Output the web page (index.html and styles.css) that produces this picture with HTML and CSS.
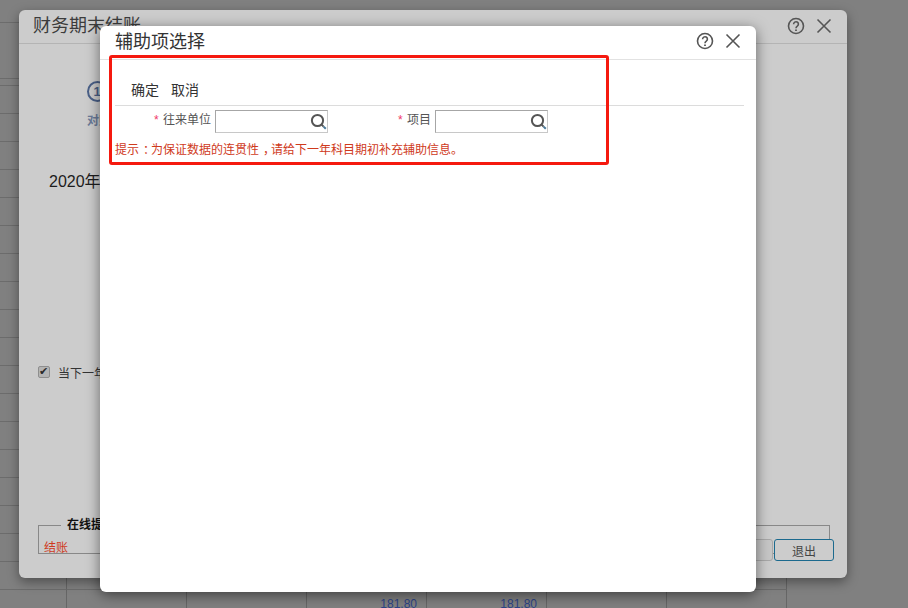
FILE: index.html
```html
<!DOCTYPE html>
<html lang="zh-CN">
<head>
<meta charset="utf-8">
<title>辅助项选择</title>
<link rel="stylesheet" href="styles.css">
</head>
<body>
<table class="sheet">
  <colgroup><col class="col-first"><col class="col"><col class="col"><col class="col"><col class="col"><col class="col"><col class="col"></colgroup>
  <tbody>
    <tr class="row-top"><td colspan="7"></td></tr>
    <tr class="row-head"><td colspan="7"></td></tr>
    <tr class="row-gap"><td colspan="7"></td></tr>
    <tr><td></td><td></td><td></td><td></td><td></td><td></td><td></td></tr>
    <tr><td></td><td></td><td></td><td></td><td></td><td></td><td></td></tr>
    <tr><td></td><td></td><td></td><td></td><td></td><td></td><td></td></tr>
    <tr><td></td><td></td><td></td><td></td><td></td><td></td><td></td></tr>
    <tr><td></td><td></td><td></td><td></td><td></td><td></td><td></td></tr>
    <tr><td></td><td></td><td></td><td></td><td></td><td></td><td></td></tr>
    <tr><td></td><td></td><td></td><td></td><td></td><td></td><td></td></tr>
    <tr><td></td><td></td><td></td><td></td><td></td><td></td><td></td></tr>
    <tr><td></td><td></td><td></td><td></td><td></td><td></td><td></td></tr>
    <tr><td></td><td></td><td></td><td></td><td></td><td></td><td></td></tr>
    <tr><td></td><td></td><td></td><td></td><td></td><td></td><td></td></tr>
    <tr><td></td><td></td><td></td><td></td><td></td><td></td><td></td></tr>
    <tr><td></td><td></td><td></td><td></td><td></td><td></td><td></td></tr>
    <tr><td></td><td></td><td></td><td></td><td></td><td></td><td></td></tr>
    <tr><td></td><td></td><td></td><td></td><td></td><td></td><td></td></tr>
    <tr><td></td><td></td><td></td><td></td><td></td><td></td><td></td></tr>
    <tr><td></td><td></td><td></td><td></td><td></td><td></td><td></td></tr>
    <tr><td></td><td></td><td></td><td></td><td></td><td></td><td></td></tr>
    <tr><td></td><td></td><td></td><td class="num">181.80</td><td class="num">181.80</td><td></td><td></td></tr>
  </tbody>
</table>

<section class="dialog outer">
  <header class="outer-head">
    <h2 class="dialog-title">财务期末结账</h2>
    <div class="head-icons">
      <svg class="icon" viewBox="0 0 18 18"><circle cx="9" cy="9" r="7.5"/><path d="M6.6 7.2a2.4 2.4 0 1 1 3.7 2c-.9.6-1.3 1-1.3 2"/><path class="dot" d="M9 12.6v1.3"/></svg>
      <svg class="icon" viewBox="0 0 18 18"><path d="M2.5 2.5l13 13M15.5 2.5l-13 13"/></svg>
    </div>
  </header>
  <div class="steps">
    <div class="step-mark">1</div>
    <div class="step-name">对账</div>
  </div>
  <p class="period">2020年</p>
  <label class="check"><input class="check-box" type="checkbox" checked><span>当下一年</span></label>
  <fieldset class="online">
    <legend class="online-legend">在线提示</legend>
    <span class="online-text">结账</span>
  </fieldset>
  <div class="actions">
    <button class="btn btn-off" type="button">结账</button>
    <button class="btn btn-exit" type="button">退出</button>
  </div>
</section>

<section class="dialog inner">
  <header class="inner-head">
    <h2 class="dialog-title">辅助项选择</h2>
    <div class="head-icons">
      <svg class="icon" viewBox="0 0 18 18"><circle cx="9" cy="9" r="7.5"/><path d="M6.6 7.2a2.4 2.4 0 1 1 3.7 2c-.9.6-1.3 1-1.3 2"/><path class="dot" d="M9 12.6v1.3"/></svg>
      <svg class="icon" viewBox="0 0 18 18"><path d="M2.5 2.5l13 13M15.5 2.5l-13 13"/></svg>
    </div>
  </header>
  <div class="inner-body">
    <div class="toolbar">
      <span class="tool">确定</span>
      <span class="tool">取消</span>
    </div>
    <div class="fields">
      <div class="field field-a">
        <span class="req">*</span><span class="field-label">往来单位</span>
        <div class="lookup"><svg class="lens" viewBox="0 0 18 18"><circle cx="7.5" cy="7.5" r="5.6"/><path class="lens-neck" d="M11.6 11.6l2 2"/><path class="lens-tail" d="M13.6 13.6l2.2 2.2"/></svg></div>
      </div>
      <div class="field field-b">
        <span class="req">*</span><span class="field-label">项目</span>
        <div class="lookup"><svg class="lens" viewBox="0 0 18 18"><circle cx="7.5" cy="7.5" r="5.6"/><path class="lens-neck" d="M11.6 11.6l2 2"/><path class="lens-tail" d="M13.6 13.6l2.2 2.2"/></svg></div>
      </div>
    </div>
    <p class="hint">提示<span class="punct">：</span>为保证数据的连贯性<span class="punct">，</span>请给下一年科目期初补充辅助信息。</p>
  </div>
  <div class="callout"></div>
</section>
</body>
</html>
```

FILE: styles.css
```css
* { box-sizing: border-box; }
html, body { margin: 0; height: 100%; }
body {
  position: relative;
  width: 908px;
  height: 608px;
  overflow: hidden;
  background: #808080;
  font-family: "Liberation Sans", "Noto Sans CJK SC", sans-serif;
  font-size: 12px;
  color: #333;
}

/* dimmed sheet behind the dialogs */
.sheet {
  width: 787px;
  table-layout: fixed;
  border-collapse: separate;
  border-spacing: 0;
}
.col-first { width: 67px; }
.col { width: 120px; }
.sheet td {
  height: 28px;
  padding: 0 9px 0 0;
  border-right: 1px solid #666;
  border-bottom: 1px solid #6c6c6c;
  text-align: right;
  color: #2c4387;
  font-size: 12px;
  line-height: 14px;
  vertical-align: middle;
}
.row-top td { height: 23px; border-right: 0; }
.row-head td { height: 56px; border-right: 0; }
.row-gap td { height: 7px; border-right: 0; }

/* windows */
.dialog { position: absolute; display: flex; flex-direction: column; }
.outer {
  left: 19px;
  top: 10px;
  width: 828px;
  height: 568px;
  background: #ccc;
  border-radius: 6px;
  box-shadow: 0 4px 12px rgba(0, 0, 0, .4);
}
.inner {
  left: 100px;
  top: 26px;
  width: 656px;
  height: 566px;
  background: #fff;
  border-radius: 6px;
  box-shadow: 0 3px 14px rgba(0, 0, 0, .5);
}
.dialog-title { margin: 0; font-size: 18px; font-weight: 400; line-height: 24px; }
.head-icons { display: flex; align-items: center; gap: 10px; }
.icon { width: 18px; height: 18px; fill: none; stroke: #555; stroke-width: 1.6; }
.icon .dot { stroke-width: 1.8; }

.outer-head {
  display: flex;
  justify-content: space-between;
  align-items: center;
  height: 34px;
  padding: 0 14px 2px 14px;
  border-bottom: 1px solid #b4b4b4;
  color: #3c3c3c;
}
.steps { width: 40px; margin: 37px 0 0 58px; display: flex; flex-direction: column; align-items: center; }
.step-mark {
  width: 21px;
  height: 21px;
  border: 2px solid #4a6088;
  border-radius: 50%;
  color: #4a6088;
  font-weight: 700;
  font-size: 13px;
  line-height: 17px;
  text-align: center;
}
.step-name { margin: 11px 0 0 4px; font-size: 12px; line-height: 16px; color: #6a7a98; font-weight: 700; white-space: nowrap; }
.period { margin: 43px 0 0 30px; font-size: 16px; line-height: 20px; color: #1c1c1c; }
.check { display: flex; align-items: center; gap: 8px; margin: 173px 0 0 19px; height: 14px; color: #333; }
.check-box {
  position: relative;
  appearance: none;
  width: 12px;
  height: 12px;
  margin: 0;
  background: #b4b4b4;
  border: 1px solid #8e8e8e;
  border-radius: 2px;
}
.check-box::after {
  content: "✔";
  position: absolute;
  left: 0;
  top: -1px;
  font: 700 11px/12px "DejaVu Sans", sans-serif;
  color: #2a2a2a;
}
.online {
  margin: 139px 0 0 19px;
  padding: 9px 5px 0;
  width: 792px;
  height: 36px;
  border: 1px solid #888;
  min-width: 0;
}
.online-legend { margin-left: 17px; padding: 0 6px; font-size: 12px; font-weight: 700; color: #111; line-height: 14px; }
.online-text { display: block; color: #cf3a1c; line-height: 15px; }
.actions { position: absolute; right: 13px; top: 529px; display: flex; gap: 1px; }
.btn {
  width: 60px;
  height: 22px;
  padding: 0;
  border: 1px solid #a8a8a8;
  border-radius: 3px;
  background: #c6c6c6;
  font: inherit;
  color: #444;
}
.btn-exit { border-color: #1c6a8e; background: #ccc; }

.inner-head {
  display: flex;
  justify-content: space-between;
  align-items: center;
  height: 34px;
  padding: 0 14px 3px 15px;
  border-bottom: 1px solid #e2e2e2;
  color: #333;
}
.inner-head .dialog-title { padding-top: 2px; }
.inner-body { padding: 0 12px 0 15px; }
.toolbar {
  display: flex;
  gap: 12px;
  height: 46px;
  padding: 20px 0 0 16px;
  border-bottom: 1px solid #dcdcdc;
  font-size: 14px;
  line-height: 20px;
  color: #333;
}
.fields { display: flex; margin-top: 4px; }
.field { display: flex; align-items: flex-start; line-height: 21px; color: #555; }
.field-a { width: 262px; padding-left: 39px; }
.field-b { padding-left: 21px; }
.req { width: 9px; color: #f0386a; font-size: 12px; }
.field-label { margin-right: 4px; }
.lookup {
  display: flex;
  justify-content: flex-end;
  width: 113px;
  height: 23px;
  padding: 2px 0 0 0;
  background: #fff;
  border: 1px solid;
  border-color: #a6a6a6 #c8c8c8 #c8c8c8 #a6a6a6;
}
.lens { width: 18px; height: 18px; margin-right: -1px; fill: none; stroke-width: 2; }
.lens circle, .lens-neck { stroke: #555; }
.lens-tail { stroke: #4a7a9a; }
.hint { margin: 9px 0 0; color: #cf3a1c; font-size: 12px; line-height: 17px; }
.punct { margin: 0 -4px 0 4px; }

/* hand-drawn highlight on top of the form */
.callout {
  position: absolute;
  left: 9px;
  top: 29px;
  width: 500px;
  height: 110px;
  border: 3px solid #f5190f;
  border-radius: 3px;
  pointer-events: none;
}
```
